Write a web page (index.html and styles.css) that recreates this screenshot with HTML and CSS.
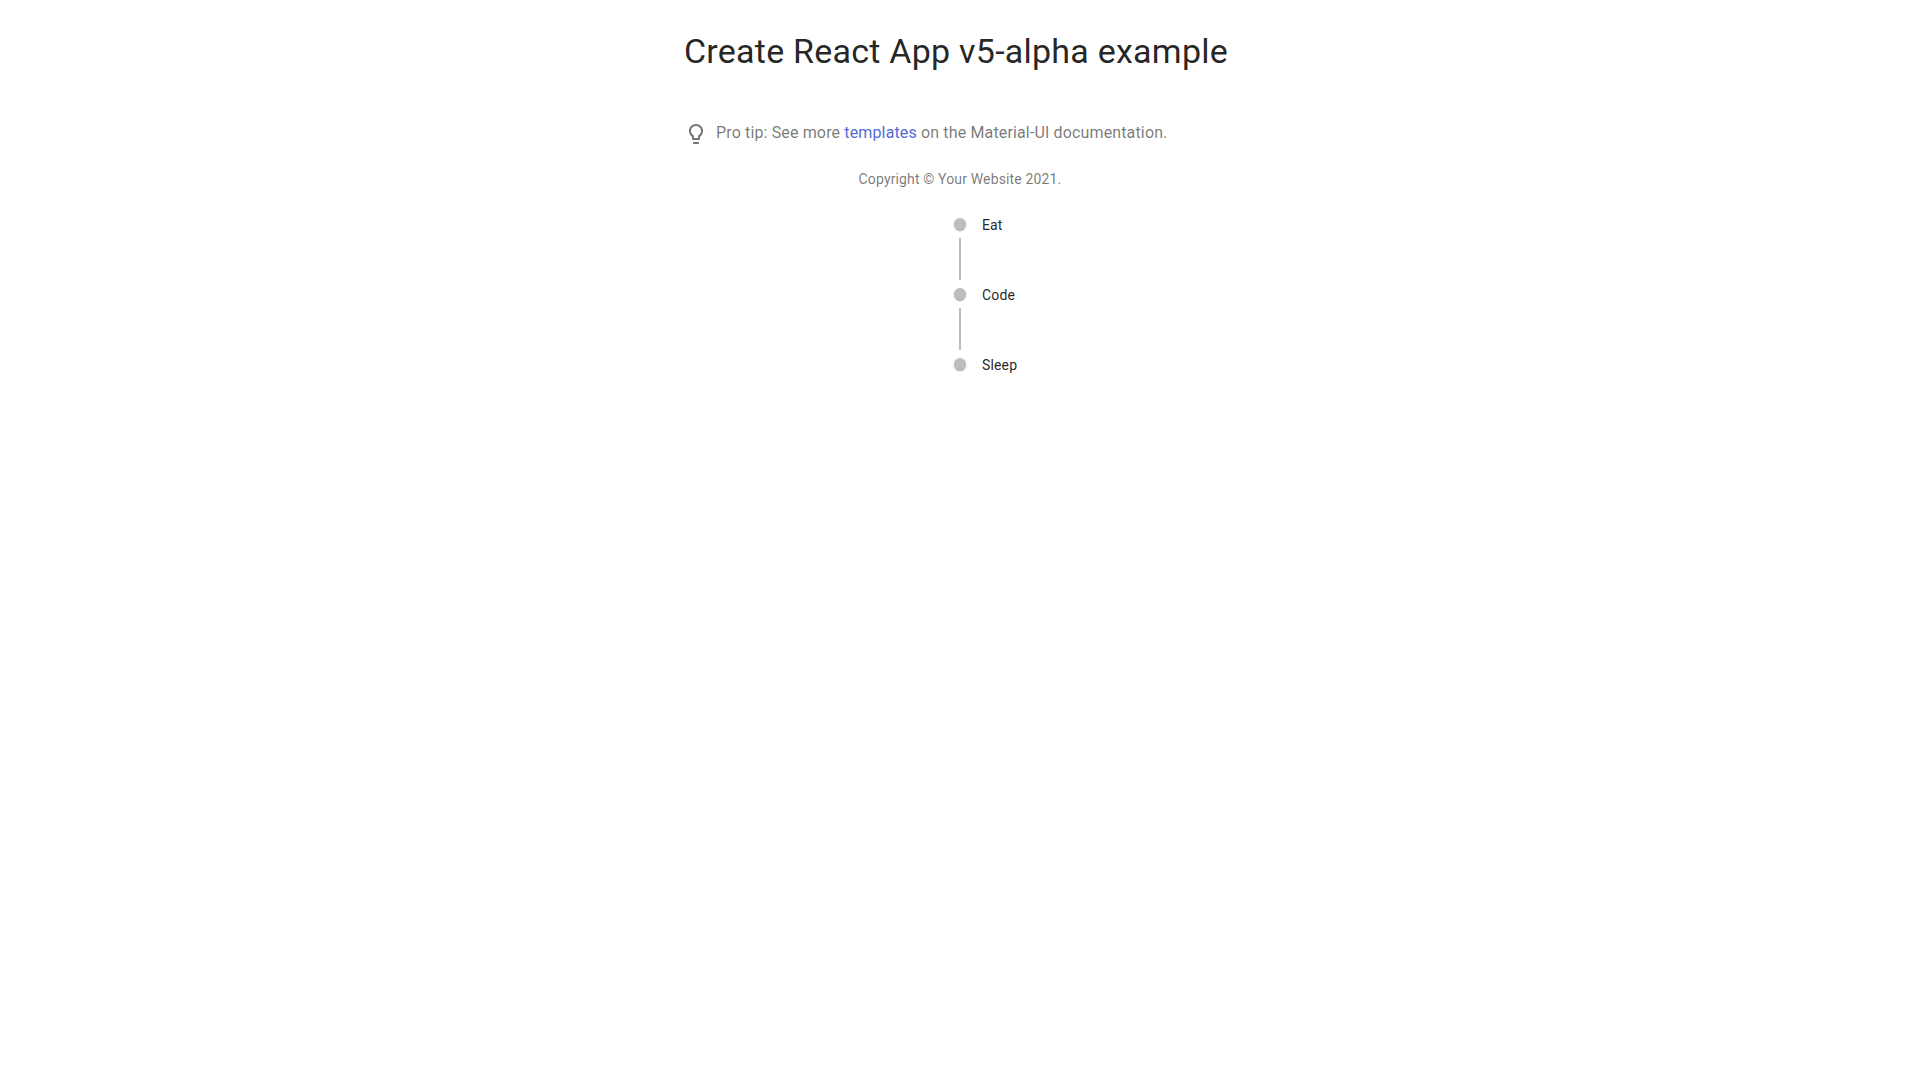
FILE: index.html
```html
<!DOCTYPE html>
<html lang="en">
<head>
<meta charset="utf-8">
<title>My page</title>
<link rel="stylesheet" href="styles.css">
</head>
<body>
<main class="container">
  <h1 class="title">Create React App v5-alpha example</h1>
  <p class="tip"><svg class="bulb" viewBox="0 0 24 24" aria-hidden="true"><path d="M9 21c0 .55.45 1 1 1h4c.55 0 1-.45 1-1v-1H9v1zm3-19C8.14 2 5 5.14 5 9c0 2.38 1.19 4.47 3 5.74V17c0 .55.45 1 1 1h6c.55 0 1-.45 1-1v-2.26c1.81-1.27 3-3.36 3-5.74 0-3.86-3.14-7-7-7zm2.85 11.1l-.85.6V16h-4v-2.3l-.85-.6C7.8 12.16 7 10.63 7 9c0-2.76 2.24-5 5-5s5 2.24 5 5c0 1.63-.8 3.16-2.15 4.1z"/></svg>Pro tip: See more <a class="link" href="#">templates</a> on the Material-UI documentation.</p>
  <p class="copyright">Copyright © Your Website 2021.</p>
  <ul class="timeline">
    <li class="item"><div class="separator"><span class="dot"></span><span class="connector"></span></div><div class="content">Eat</div></li>
    <li class="item"><div class="separator"><span class="dot"></span><span class="connector"></span></div><div class="content">Code</div></li>
    <li class="item"><div class="separator"><span class="dot"></span></div><div class="content">Sleep</div></li>
  </ul>
</main>
</body>
</html>
```
FILE: styles.css
```css
*, *::before, *::after { box-sizing: border-box; }
body {
  margin: 0;
  background: #fff;
  color: rgba(0, 0, 0, 0.87);
  font-family: Roboto, sans-serif;
  font-size: 14px;
  line-height: 17px;
  letter-spacing: 0.01071em;
}
.container {
  width: 600px;
  margin: 32px auto 0;
  padding: 0 24px;
}
.title {
  margin: 0 0 51px;
  font-size: 34px;
  font-weight: 400;
  line-height: 38px;
  letter-spacing: 0.007em;
}
.tip {
  height: 26px;
  margin: 0 0 24px;
  color: rgba(0, 0, 0, 0.54);
  font-size: 16px;
  line-height: 24px;
  letter-spacing: 0.0089em;
}
.bulb {
  width: 24px;
  height: 24px;
  margin-right: 8px;
  fill: currentColor;
  vertical-align: middle;
}
.link { color: #556cd6; text-decoration: none; }
.copyright {
  margin: 0;
  color: rgba(0, 0, 0, 0.54);
  text-align: center;
}
.timeline {
  display: flex;
  flex-direction: column;
  margin: 17px 0 16px;
  padding: 6px 16px;
  list-style: none;
}
.item { display: flex; min-height: 70px; }
.item::before { content: ""; flex: 1; padding: 6px 16px; }
.separator { display: flex; flex-direction: column; align-items: center; }
.dot {
  margin: 7px 0 8px;
  padding: 4px;
  border: 2px solid transparent;
  border-radius: 50%;
  background: #bdbdbd;
  box-shadow: 0 2px 1px -1px rgba(0,0,0,.2), 0 1px 1px rgba(0,0,0,.14), 0 1px 3px rgba(0,0,0,.12);
}
.connector { flex-grow: 1; width: 2px; margin-bottom: 1px; background: #bdbdbd; }
.content { flex: 1; padding: 6px 16px; }
```
